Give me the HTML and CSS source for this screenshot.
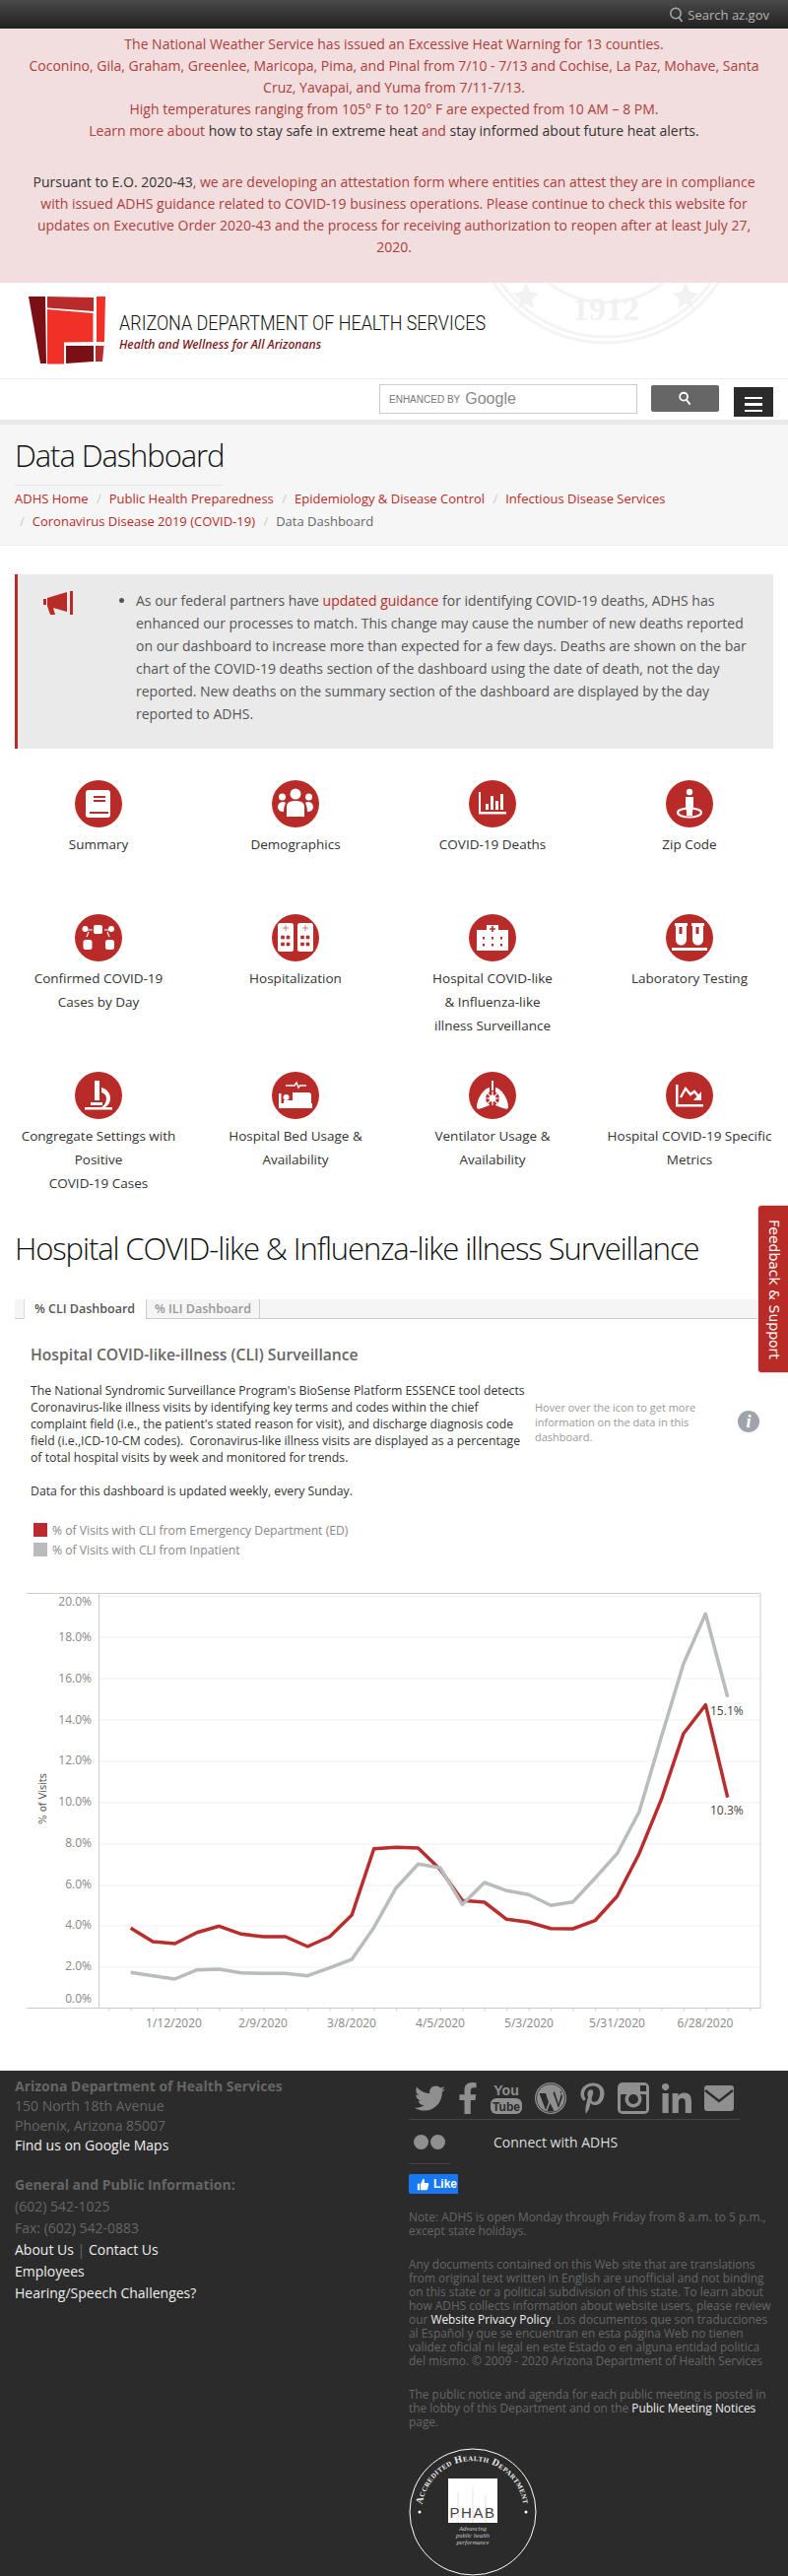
FILE: index.html
```html
<!DOCTYPE html>
<html lang="en">
<head>
    <meta charset="UTF-8">
    <meta name="viewport" content="width=device-width, initial-scale=1.0">
    <title>Data Dashboard</title>
    <link rel="stylesheet" href="styles.css">
</head>
<body>
    <div class="top-bar">
        <svg class="top-search-icon" viewBox="0 0 16 16"><circle cx="7" cy="6.5" r="5.2"/><path d="M10.5 11l3 4"/></svg>
        <span>Search az.gov</span>
    </div>

    <div class="heat-alert">
        <p>The National Weather Service has issued an Excessive Heat Warning for 13 counties.<br>
        Coconino, Gila, Graham, Greenlee, Maricopa, Pima, and Pinal from 7/10 - 7/13 and Cochise, La Paz, Mohave, Santa Cruz, Yavapai, and Yuma from 7/11-7/13.<br>
        High temperatures ranging from 105&deg; F to 120&deg; F are expected from 10 AM &ndash; 8 PM.<br>
        <a href="#">Learn more about</a> <a href="#" class="dark">how to stay safe in extreme heat</a> <a href="#">and</a> <a href="#" class="dark">stay informed about future heat alerts.</a></p>
        <p><a href="#" class="dark">Pursuant to E.O. 2020-43</a>, we are developing an attestation form where entities can attest they are in compliance with issued ADHS guidance related to COVID-19 business operations. Please continue to check this website for updates on Executive Order 2020-43 and the process for receiving authorization to reopen after at least July 27, 2020.</p>
    </div>

    <div class="site-header">
        <svg class="watermark" viewBox="0 0 300 120">
            <circle cx="135" cy="-76" r="137" class="wm-ring"/>
            <circle cx="135" cy="-76" r="131" class="wm-ring"/>
            <circle cx="135" cy="-76" r="96" class="wm-ring"/>
            <path class="wm-star" d="M54 0l4 9 9 2-7 6 2 9-8-5-8 5 2-9-7-6 9-2zM216 0l4 9 9 2-7 6 2 9-8-5-8 5 2-9-7-6 9-2z"/>
            <text x="135" y="38" class="wm-text">1912</text>
        </svg>
        <svg class="logo" viewBox="29 301 78 69">
            <path fill="#7a1015" d="M29 301h17l1 68h-6z"/>
            <path fill="#b92b2b" d="M48 301l47 1v14l-47-3.5z"/>
            <path fill="#f13128" d="M98 301h9l-1 46h-8zM48 314l46.5 4v29l-29.5 .5v22h-17z"/>
            <path fill="#7a1015" d="M67 351h28v16l-28 2z"/>
            <path fill="#b92b2b" d="M97 351h8.5l-1.5 16h-7z"/>
        </svg>
        <div class="logo-text">
            <div class="logo-title">ARIZONA DEPARTMENT OF HEALTH SERVICES</div>
            <div class="logo-tag">Health and Wellness for All Arizonans</div>
        </div>
    </div>

    <div class="search-row">
        <div class="search-box"><span class="enhanced">ENHANCED BY</span> <span class="google">Google</span></div>
        <button class="search-btn"><svg viewBox="0 0 16 16"><circle cx="6.5" cy="6" r="4.2"/><path d="M9.5 9.5l4 5"/></svg></button>
        <button class="menu-btn"><span></span><span></span><span></span></button>
    </div>

    <div class="title-band">
        <h1>Data Dashboard</h1>
        <ul class="crumbs">
            <li><a href="#">ADHS Home</a></li>
            <li><a href="#">Public Health Preparedness</a></li>
            <li><a href="#">Epidemiology &amp; Disease Control</a></li>
            <li><a href="#">Infectious Disease Services</a></li>
            <li><a href="#">Coronavirus Disease 2019 (COVID-19)</a></li>
            <li>Data Dashboard</li>
        </ul>
    </div>

    <div class="notice">
        <svg class="notice-icon" viewBox="0 0 32 24"><path d="M0 8h3v6H0zM4 7l20-6v20l-14-4 2 7H7l-3-9z"/><path d="M27 0h3v24h-3z"/></svg>
        <ul>
            <li>As our federal partners have <a href="#">updated guidance</a> for identifying COVID-19 deaths, ADHS has enhanced our processes to match. This change may cause the number of new deaths reported on our dashboard to increase more than expected for a few days. Deaths are shown on the bar chart of the COVID-19 deaths section of the dashboard using the date of death, not the day reported. New deaths on the summary section of the dashboard are displayed by the day reported to ADHS.</li>
        </ul>
    </div>

    <div class="tiles">
        <a class="tile" href="#">
            <span class="disc"><svg viewBox="0 0 48 48"><rect x="11" y="10" width="25" height="28" rx="3" fill="#fff"/><path d="M19 17h12M19 21h12M15 33h19" stroke="#b92b29" stroke-width="2"/></svg></span>
            Summary
        </a>
        <a class="tile" href="#">
            <span class="disc"><svg viewBox="0 0 48 48" fill="#fff"><circle cx="24" cy="14" r="5.5"/><circle cx="10.5" cy="17" r="3.5"/><circle cx="37.5" cy="17" r="3.5"/><path d="M15 37v-10c0-4 3-6 9-6s9 2 9 6v10zM6 28c0-4 2-6 6-6l2 1c-1 2-2 5-2 9-3 0-5-1-6-4zM42 28c0-4-2-6-6-6l-2 1c1 2 2 5 2 9 3 0 5-1 6-4z"/></svg></span>
            Demographics
        </a>
        <a class="tile" href="#">
            <span class="disc"><svg viewBox="0 0 48 48" fill="#fff"><path d="M10 12h2v20h26v2.5H10zM17 24h3v6h-3zM22 16h3v14h-3zM27 21h3v9h-3zM32 14h3v16h-3z"/></svg></span>
            COVID-19 Deaths
        </a>
        <a class="tile" href="#">
            <span class="disc"><svg viewBox="0 0 48 48" fill="#fff"><circle cx="24" cy="12" r="3.2"/><path d="M20 17h8v9l-1.5 10h-5L20 26z"/><ellipse cx="24" cy="33" rx="12" ry="4.5" fill="none" stroke="#fff" stroke-width="2.2"/><path d="M24 27v9" stroke="#fff" stroke-width="6"/></svg></span>
            Zip Code
        </a>

        <a class="tile" href="#">
            <span class="disc"><svg viewBox="0 0 48 48" fill="#fff"><rect x="19" y="11" width="9" height="9" rx="2"/><circle cx="10.5" cy="15" r="3"/><circle cx="37" cy="15" r="3"/><rect x="8.5" y="26" width="9" height="10" rx="2.5"/><rect x="31" y="26" width="9" height="10" rx="2.5"/><path d="M18 16h-6M30 16h5M14 18l-2 5M33 18l2 5" stroke="#fff" stroke-width="1.2"/></svg></span>
            Confirmed COVID-19<br>Cases by Day
        </a>
        <a class="tile" href="#">
            <span class="disc"><svg viewBox="0 0 48 48"><rect x="6" y="9" width="16" height="29" rx="2.5" fill="#fff"/><rect x="26" y="9" width="16" height="29" rx="2.5" fill="#fff"/><path d="M14 11v6M11 14h6M34 11v6M31 14h6M9.5 22h3v3h-3zM15 22h3v3h-3zM9.5 29h3v3h-3zM15 29h3v3h-3zM29.5 22h3v3h-3zM35 22h3v3h-3zM29.5 29h3v3h-3zM35 29h3v3h-3z" fill="#b92b29" stroke="#b92b29" stroke-width=".6"/></svg></span>
            Hospitalization
        </a>
        <a class="tile" href="#">
            <span class="disc"><svg viewBox="0 0 48 48"><path d="M8 16h10v-5h12v5h10v21H8z" fill="#fff"/><path d="M24 12v6M21 15h6" stroke="#b92b29" stroke-width="1.6"/><path d="M14 23h2v2.5h-2zM23 23h2v2.5h-2zM32 23h2v2.5h-2zM14 30h2v2.5h-2zM23 30h2v2.5h-2zM32 30h2v2.5h-2z" fill="#b92b29"/></svg></span>
            Hospital COVID-like<br>&amp; Influenza-like<br>illness Surveillance
        </a>
        <a class="tile" href="#">
            <span class="disc"><svg viewBox="0 0 48 48"><path d="M9 9h13v3h-1v14a4.5 4.5 0 0 1-11 0V12H9zM26 9h13v3h-1v14a4.5 4.5 0 0 1-11 0V12h-1zM6 34h36v3H6z" fill="#fff"/><path d="M13.5 13h3v7h-3zM30.5 13h3v7h-3z" fill="#b92b29"/></svg></span>
            Laboratory Testing
        </a>

        <a class="tile" href="#">
            <span class="disc"><svg viewBox="0 0 48 48" fill="#fff"><path d="M20 9h5v20h-5zM10 36h28v2.5H10zM16 31h12v3H16z"/><path d="M27 16c6 2 9 6 9 11 0 4-2 7-5 9h-4c3-2 5-5 5-9 0-3-2-5-5-6z"/></svg></span>
            Congregate Settings with<br>Positive<br>COVID-19 Cases
        </a>
        <a class="tile" href="#">
            <span class="disc"><svg viewBox="0 0 48 48" fill="#fff"><path d="M7 22h2.5v10H40V24c0-2-1-3-3-3H21v8h-9v8H7zM12 32h29v5H12z"/><circle cx="14.5" cy="26" r="3"/><path d="M14 14h9l2-3 2 5 1.5-2H35" fill="none" stroke="#fff" stroke-width="1.4"/></svg></span>
            Hospital Bed Usage &amp;<br>Availability
        </a>
        <a class="tile" href="#">
            <span class="disc"><svg viewBox="0 0 48 48" fill="#fff"><path d="M23 9h2v10h-2z"/><path d="M21 16c-6 1-13 11-13 20 0 2 2 2 5 1l8-3zM27 16c6 1 13 11 13 20 0 2-2 2-5 1l-8-3z"/><circle cx="24" cy="27" r="7" fill="#b92b29"/><circle cx="24" cy="27" r="3.5"/><path d="M24 20v14M17 27h14M19 22l10 10M29 22L19 32" stroke="#fff" stroke-width="1.2"/></svg></span>
            Ventilator Usage &amp;<br>Availability
        </a>
        <a class="tile" href="#">
            <span class="disc"><svg viewBox="0 0 48 48" fill="#fff"><path d="M10 13h2.5v20H38v2.5H10z"/><path d="M15 26l5-9 5 6 4-3 5 6" fill="none" stroke="#fff" stroke-width="2.4"/><path d="M36 20v9h-8z"/></svg></span>
            Hospital COVID-19 Specific<br>Metrics
        </a>
    </div>

    <h2 class="section-title">Hospital COVID-like &amp; Influenza-like illness Surveillance</h2>

    <div class="tabs">
        <span class="tab active">% CLI Dashboard</span>
        <span class="tab">% ILI Dashboard</span>
    </div>

    <div class="dash">
        <h3>Hospital COVID-like-illness (CLI) Surveillance</h3>
        <div class="dash-row">
            <div class="dash-text">
                The National Syndromic Surveillance Program's BioSense Platform ESSENCE tool detects Coronavirus-like illness visits by identifying key terms and codes within the chief complaint field (i.e., the patient's stated reason for visit), and discharge diagnosis code field (i.e.,ICD-10-CM codes).&nbsp; Coronavirus-like illness visits are displayed as a percentage of total hospital visits by week and monitored for trends.<br><br>
                Data for this dashboard is updated weekly, every Sunday.
            </div>
            <div class="dash-hover">Hover over the icon to get more information on the data in this dashboard.</div>
            <div class="info-dot">i</div>
        </div>
        <div class="legend">
            <div class="legend-row"><span class="swatch red"></span>% of Visits with CLI from Emergency Department (ED)</div>
            <div class="legend-row"><span class="swatch grey"></span>% of Visits with CLI from Inpatient</div>
        </div>
    </div>

    <svg class="chart" viewBox="0 0 800 502">
        <path class="grid" d="M101 20.5H772M101 62H772M101 104H772M101 146H772M101 188H772M101 230H772M101 272H772M101 314H772M101 355H772M101 397H772"/>
        <path class="frame" d="M27 17.5H772V438.5H27M100.5 17.5V438.5"/>
        <line class="ticks" x1="110.2" y1="440" x2="765" y2="440"/>
        <text class="y-tick" x="93" y="30">20.0%</text>
        <text class="y-tick" x="93" y="66">18.0%</text>
        <text class="y-tick" x="93" y="108">16.0%</text>
        <text class="y-tick" x="93" y="150">14.0%</text>
        <text class="y-tick" x="93" y="191">12.0%</text>
        <text class="y-tick" x="93" y="233">10.0%</text>
        <text class="y-tick" x="93" y="275">8.0%</text>
        <text class="y-tick" x="93" y="317">6.0%</text>
        <text class="y-tick" x="93" y="358">4.0%</text>
        <text class="y-tick" x="93" y="400">2.0%</text>
        <text class="y-tick" x="93" y="433">0.0%</text>
        <text class="x-tick" x="176.5" y="458">1/12/2020</text>
        <text class="x-tick" x="267" y="458">2/9/2020</text>
        <text class="x-tick" x="357" y="458">3/8/2020</text>
        <text class="x-tick" x="447" y="458">4/5/2020</text>
        <text class="x-tick" x="537" y="458">5/3/2020</text>
        <text class="x-tick" x="626.5" y="458">5/31/2020</text>
        <text class="x-tick" x="716" y="458">6/28/2020</text>
        <text class="y-title" transform="translate(47 226) rotate(-90)">% of Visits</text>
        <polyline class="line-red" points="132.7,357.3 155.1,371 177.6,373 200,361.7 222.5,355.3 244.9,363.3 267.4,366 289.8,366 312.3,376 334.7,366 357.2,344 379.6,276.7 402,275.3 424.5,276 446.9,297.7 469.4,329.3 491.8,331 514.3,348.3 536.7,351.3 559.2,357.7 581.6,358 604,349.7 626.5,325 648.9,281.7 671.4,226.7 693.8,160 716.3,130.7 738.7,224.7"/>
        <polyline class="line-grey" points="132.7,402.3 155.1,405.7 177.6,409 200,399.7 222.5,399 244.9,402.7 267.4,403.3 289.8,403.3 312.3,405.7 334.7,397.7 357.2,389 379.6,356.7 402,316.7 424.5,292.3 446.9,296 469.4,333.3 491.8,311 514.3,319.3 536.7,323.3 559.2,334.3 581.6,330.7 604,306.7 626.5,281.7 648.9,239.3 671.4,163.3 693.8,89.3 716.3,38.3 738.7,122.7"/>
        <text class="end-label" x="721" y="141">15.1%</text>
        <text class="end-label" x="721" y="242">10.3%</text>
    </svg>

    <a class="feedback" href="#">Feedback &amp; Support</a>

    <footer class="site-footer">
        <div class="foot-left">
            <div class="foot-addr">
                <strong>Arizona Department of Health Services</strong><br>
                150 North 18th Avenue<br>
                Phoenix, Arizona 85007<br>
                <a href="#">Find us on Google Maps</a>
            </div>
            <div class="foot-info">
                <strong>General and Public Information:</strong><br>
                (602) 542-1025<br>
                Fax: (602) 542-0883<br>
                <a href="#">About Us</a> <span class="pipe">|</span> <a href="#">Contact Us</a><br>
                <a href="#">Employees</a><br>
                <a href="#">Hearing/Speech Challenges?</a>
            </div>
        </div>
        <div class="foot-right">
            <div class="social">
                <svg class="soc tw" viewBox="0 0 512 512"><path d="M459.37 151.716c.325 4.548.325 9.097.325 13.645 0 138.72-105.583 298.558-298.558 298.558-59.452 0-114.68-17.219-161.137-47.106 8.447.974 16.568 1.299 25.34 1.299 49.055 0 94.213-16.568 130.274-44.832-46.132-.975-84.792-31.188-98.112-72.772 6.498.974 12.995 1.624 19.818 1.624 9.421 0 18.843-1.3 27.614-3.573-48.081-9.747-84.143-51.98-84.143-102.985v-1.299c13.969 7.797 30.214 12.67 47.431 13.319-28.264-18.843-46.781-51.005-46.781-87.391 0-19.492 5.197-37.36 14.294-52.954 51.655 63.675 129.3 105.258 216.365 109.807-1.624-7.797-2.599-15.918-2.599-24.04 0-57.828 46.782-104.934 104.934-104.934 30.213 0 57.502 12.67 76.67 33.137 23.715-4.548 46.456-13.32 66.599-25.34-7.798 24.366-24.366 44.833-46.132 57.827 21.117-2.273 41.584-8.122 60.426-16.243-14.292 20.791-32.161 39.308-52.628 54.253z"/></svg>
                <svg class="soc fb" viewBox="0 0 320 512"><path d="M279.14 288l14.22-92.66h-88.91v-60.13c0-25.35 12.42-50.06 52.24-50.06h40.42V6.26S260.43 0 225.36 0c-73.22 0-121.08 44.38-121.08 124.72v70.62H22.89V288h81.39v224h100.17V288z"/></svg>
                <svg class="soc wide" viewBox="0 0 32 32"><text x="16" y="13" class="yt-you">You</text><rect y="16" width="32" height="16" rx="6"/><text x="16" y="29" class="yt-tube">Tube</text></svg>
                <svg class="soc wide" viewBox="0 0 32 32"><circle cx="16" cy="16" r="16"/><circle cx="16" cy="16" r="14.5" fill="none" stroke="#2b2b2b" stroke-width=".8"/><path d="M4.5 11L11 28l3-8-3-9zM12 9h8l-1.5 1.5L24 26l4-11c0-2-1-4-2-5l-.5-1H27v2l-3 11-4-13h-8zM15.5 21l-3 8c2 .6 5 .6 7 0z" fill="#2b2b2b"/></svg>
                <svg class="soc pin" viewBox="0 0 384 512"><path d="M204 6.5C101.4 6.5 0 74.9 0 185.6 0 256 39.6 296 63.6 296c9.9 0 15.6-27.6 15.6-35.4 0-9.3-23.7-29.1-23.7-67.8 0-80.4 61.2-137.4 140.4-137.4 68.1 0 118.5 38.7 118.5 109.8 0 53.1-21.3 152.7-90.3 152.7-24.9 0-46.2-18-46.2-43.8 0-37.8 26.4-74.4 26.4-113.4 0-66.2-93.9-54.2-93.9 25.8 0 16.8 2.1 35.4 9.6 50.7-13.8 59.4-42 147.9-42 209.1 0 18.9 2.7 37.5 4.5 56.4 3.4 3.8 1.7 3.4 6.9 1.5 50.4-69 48.6-82.5 71.4-172.8 12.3 23.4 44.1 36 69.3 36 106.2 0 153.9-103.5 153.9-196.8C384 71.3 298.2 6.5 204 6.5z"/></svg>
                <svg class="soc wide" viewBox="0 0 32 32"><rect width="32" height="32" rx="5"/><rect x="3" y="12" width="26" height="17" rx="1" fill="#2b2b2b"/><circle cx="16" cy="17" r="8.5"/><circle cx="16" cy="17" r="5" fill="#2b2b2b"/><rect x="23" y="3" width="6" height="6" fill="#2b2b2b"/></svg>
                <svg class="soc med" viewBox="0 0 448 448"><path d="M100.28 448H7.4V148.9h92.88zM53.79 108.1C24.09 108.1 0 83.5 0 53.8a53.79 53.79 0 0 1 107.58 0c0 29.7-24.1 54.3-53.79 54.3zM447.9 448h-92.68V302.4c0-34.7-.7-79.2-48.29-79.2-48.29 0-55.69 37.7-55.69 76.7V448h-92.78V148.9h89.08v40.8h1.3c12.4-23.5 42.69-48.3 87.88-48.3 94 0 111.28 61.9 111.28 142.3V448z"/></svg>
                <svg class="soc med" viewBox="0 0 30 32"><rect y="3" width="30" height="26" rx="3"/><path d="M1 8l14 11L29 8" fill="none" stroke="#2b2b2b" stroke-width="2.5"/></svg>
            </div>
            <div class="connect-row">
                <svg class="flickr" viewBox="0 0 32 16"><circle cx="7.5" cy="7.5" r="7.5"/><circle cx="24.5" cy="7.5" r="7.5"/></svg>
                <span>Connect with ADHS</span>
            </div>
            <div class="like-btn"><svg viewBox="0 0 16 16"><path d="M1 7h3v8H1zM5 7l3-6c2 0 2 2 1.5 5H14c1 0 1.5 1 1 2l-1.5 6c-.2.7-.7 1-1.5 1H5z"/></svg>Like</div>
            <p>Note: ADHS is open Monday through Friday from 8 a.m. to 5 p.m., except state holidays.</p>
            <p>Any documents contained on this Web site that are translations from original text written in English are unofficial and not binding on this state or a political subdivision of this state. To learn about how ADHS collects information about website users, please review our <a href="#">Website Privacy Policy</a>. Los documentos que son traducciones al Espa&ntilde;ol y que se encuentran en esta p&aacute;gina Web no tienen validez oficial ni legal en este Estado o en alguna entidad politica del mismo. &copy; 2009 - 2020 Arizona Department of Health Services</p>
            <p>The public notice and agenda for each public meeting is posted in the lobby of this Department and on the <a href="#">Public Meeting Notices</a> page.</p>
            <svg class="seal" viewBox="0 0 130 130">
                <defs>
                    <path id="seal-top" d="M65 117A52 52 0 1 1 65.01 117"/>
                    <path id="seal-bottom" d="M65 5A60 60 0 1 0 64.99 5"/>
                </defs>
                <circle cx="65" cy="65" r="64" class="seal-ring"/>
                <text class="seal-text"><textPath href="#seal-top" startOffset="50%">Accredited Health Department</textPath></text>
                <text class="seal-text"><textPath href="#seal-bottom" startOffset="50%">Public Health Accreditation Board</textPath></text>
                <circle cx="11" cy="65" r="1.5" fill="#fff"/>
                <circle cx="119" cy="65" r="1.5" fill="#fff"/>
                <rect x="40" y="31" width="50" height="45" fill="#fff"/>
                <path d="M50 45v31M65 40v36M78 48v28" stroke="#ccc" stroke-width=".6"/>
                <text x="65" y="71" class="seal-phab">PHAB</text>
                <text x="65" y="84" class="seal-small">Advancing</text>
                <text x="65" y="91" class="seal-small">public health</text>
                <text x="65" y="98" class="seal-small">performance</text>
            </svg>
        </div>
    </footer>
</body>
</html>
```

FILE: styles.css
```css
* {
    box-sizing: border-box;
}

body {
    margin: 0;
    position: relative;
    font-family: "Open Sans", Arial, sans-serif;
    font-size: 14px;
    color: #333;
    background-color: #fff;
}

a {
    color: #b92b27;
    text-decoration: none;
}

.top-bar {
    height: 29px;
    display: flex;
    align-items: center;
    justify-content: flex-end;
    padding-right: 19px;
    background: linear-gradient(#4a4a4a, #202020);
    color: #b5b5b5;
    font-size: 13px;
}

.top-search-icon {
    width: 16px;
    height: 16px;
    margin-right: 3px;
    fill: none;
    stroke: #aaa;
    stroke-width: 1.5;
}

.heat-alert {
    height: 258px;
    padding: 5px 15px 0;
    background-color: #f2dede;
    color: #ac3f3d;
    font-size: 14px;
    line-height: 22px;
    text-align: center;
}

.heat-alert p {
    margin: 0 0 30px;
}

.heat-alert p + p {
    padding: 0 10px;
}

.heat-alert a {
    color: #ac3f3d;
}

.heat-alert a.dark {
    color: #333;
}

.site-header {
    position: relative;
    height: 97px;
    padding: 14px 0 0 29px;
    display: flex;
    overflow: hidden;
}

.watermark {
    position: absolute;
    left: 480px;
    top: 0;
    width: 300px;
    height: 120px;
}

.wm-ring {
    fill: none;
    stroke: #f4f4f4;
    stroke-width: 3;
}

.wm-star {
    fill: #f2f2f2;
}

.wm-text {
    font-family: "Liberation Serif", serif;
    font-size: 34px;
    font-weight: bold;
    fill: #f1f1f1;
    text-anchor: middle;
}

.logo {
    width: 78px;
    height: 69px;
    flex-shrink: 0;
    position: relative;
}

.logo-text {
    margin: 15px 0 0 14px;
    position: relative;
}

.logo-title {
    font-family: Roboto, sans-serif;
    font-weight: 300;
    font-size: 21px;
    line-height: 24px;
    color: #111;
    white-space: nowrap;
    transform: scaleX(.855);
    transform-origin: left center;
}

.logo-tag {
    margin-top: 2px;
    font-family: "Noto Sans", sans-serif;
    font-style: italic;
    font-weight: 500;
    font-size: 12.2px;
    line-height: 16px;
    color: #7a1015;
}

.search-row {
    height: 42px;
    border-top: 1px solid #eee;
    display: flex;
    align-items: flex-start;
    padding: 5px 15px 0 385px;
}

.search-box {
    width: 262px;
    height: 30px;
    border: 1px solid #ccc;
    padding-left: 9px;
    display: flex;
    align-items: center;
    gap: 5px;
    font-family: "Liberation Sans", sans-serif;
    color: #777;
}

.enhanced {
    font-size: 10px;
}

.google {
    font-size: 16px;
    color: #888;
}

.search-btn {
    width: 69px;
    height: 27px;
    margin: 1px 0 0 14px;
    border: 0;
    border-radius: 2px;
    background-color: #666;
    padding: 0;
}

.search-btn svg {
    width: 15px;
    height: 15px;
    fill: none;
    stroke: #fff;
    stroke-width: 2;
    vertical-align: middle;
}

.menu-btn {
    width: 40px;
    height: 30px;
    margin: 3px 0 0 15px;
    border: 0;
    padding: 10px 11px 5px;
    background-color: #2b2b2b;
    display: flex;
    flex-direction: column;
    gap: 4px;
}

.menu-btn span {
    display: block;
    width: 18px;
    height: 3px;
    background-color: #fff;
}

.title-band {
    height: 128px;
    border-top: 5px solid #e9e9e9;
    border-bottom: 1px solid #eee;
    background-color: #f6f6f6;
    padding: 11px 15px 0;
}

h1 {
    display: inline-block;
    margin: 0;
    font-size: 31px;
    font-weight: 300;
    line-height: 40px;
    letter-spacing: -1.1px;
    padding-bottom: 10px;
    border-bottom: 1px solid #e5e5e5;
    color: #111;
}

.crumbs {
    list-style: none;
    margin: 2px 0 0;
    padding: 0;
    font-size: 13px;
    line-height: 23px;
}

.crumbs li {
    display: inline-block;
    color: #666;
}

.crumbs li + li::before {
    content: "/";
    padding: 0 8px 0 5px;
    color: #ccc;
}

.notice {
    margin: 29px 15px 0;
    height: 177px;
    background-color: #eaeaea;
    border-left: 3px solid #b92b27;
    display: flex;
    color: #555;
    line-height: 23px;
}

.notice-icon {
    width: 32px;
    height: 24px;
    margin: 17px 0 0 26px;
    flex-shrink: 0;
    fill: #b92b27;
}

.notice ul {
    margin: 15px 0 0;
    padding: 0 26px 0 62px;
}

.tiles {
    margin-top: 32px;
    display: grid;
    grid-template-columns: repeat(4, 200px);
    grid-auto-rows: min-content;
}

.tile {
    display: block;
    min-height: 136px;
    padding-bottom: 35px;
    color: #333;
    font-size: 13.5px;
    text-align: center;
    line-height: 24px;
}

.disc {
    display: block;
    width: 48px;
    height: 48px;
    margin: 0 auto 5px;
    border-radius: 50%;
    background-color: #b92b29;
}

.disc svg {
    display: block;
    width: 48px;
    height: 48px;
}

.section-title {
    margin: 0;
    padding-left: 15px;
    font-size: 31px;
    font-weight: 300;
    line-height: 38px;
    letter-spacing: -1.1px;
    color: #111;
}

.tabs {
    margin: 33px 31px 0 15px;
    height: 20px;
    background-color: #f5f5f5;
    border-bottom: 1px solid #ccc;
    padding-left: 9px;
    display: flex;
    font-size: 12.5px;
    font-weight: 600;
    line-height: 19px;
    color: #999;
}

.tab {
    height: 19px;
    padding: 0 8px;
    border-right: 1px solid #ccc;
}

.tab.active {
    height: 20px;
    width: 125px;
    padding: 0 0 0 10px;
    background-color: #fff;
    border-left: 1px solid #ddd;
    color: #555;
}

.dash {
    padding-left: 31px;
}

.dash h3 {
    margin: 26px 0 18px;
    font-size: 15.7px;
    font-weight: 600;
    line-height: 20px;
    color: #666;
}

.dash-row {
    display: flex;
}

.dash-text {
    width: 505px;
    flex-shrink: 0;
    font-size: 12.25px;
    line-height: 17px;
    color: #333;
}

.dash-hover {
    width: 180px;
    margin: 18px 0 0 7px;
    font-size: 11px;
    line-height: 15px;
    color: #999;
}

.info-dot {
    width: 22px;
    height: 22px;
    margin: 29px 0 0 26px;
    border-radius: 50%;
    background-color: #9ea3ac;
    color: #fff;
    font-family: "Liberation Serif", serif;
    font-style: italic;
    font-weight: bold;
    font-size: 18px;
    line-height: 22px;
    text-align: center;
}

.legend {
    margin: 24px 0 0 3px;
    font-size: 12.2px;
    color: #888;
}

.legend-row {
    display: flex;
    align-items: center;
    height: 14px;
    margin-bottom: 6px;
}

.swatch {
    width: 14px;
    height: 14px;
    margin-right: 5px;
}

.swatch.red {
    background-color: #b92b2f;
}

.swatch.grey {
    background-color: #b9bbbd;
}

.chart {
    display: block;
    width: 800px;
    height: 502px;
    margin-top: 20px;
}

.grid {
    fill: none;
    stroke: #f0f0f0;
}

.frame {
    fill: none;
    stroke: #ccc;
}

.ticks {
    stroke: #ccc;
    stroke-width: 3;
    stroke-dasharray: 1 21.45;
}

.y-tick {
    font-size: 12px;
    fill: #888;
    text-anchor: end;
}

.x-tick {
    font-size: 12px;
    fill: #888;
    text-anchor: middle;
}

.y-title {
    font-family: "DejaVu Sans", sans-serif;
    font-size: 10px;
    fill: #555;
    text-anchor: middle;
}

.end-label {
    font-size: 12px;
    fill: #444;
}

.line-red,
.line-grey {
    fill: none;
    stroke-width: 3.5;
    stroke-linejoin: round;
}

.line-red {
    stroke: #b82e2e;
}

.line-grey {
    stroke: #b9bcbc;
}

.feedback {
    position: absolute;
    top: 1223px;
    right: 0;
    width: 31px;
    height: 171px;
    border-radius: 4px 0 0 4px;
    border: 1px solid #ddd;
    border-right: 0;
    background-color: #b92b27;
    color: #fff;
    font-family: "DejaVu Sans", sans-serif;
    font-size: 14px;
    line-height: 29px;
    text-align: center;
    white-space: nowrap;
    writing-mode: vertical-rl;
}

.site-footer {
    height: 513px;
    background-color: #2b2b2b;
    color: #666;
    display: flex;
}

.site-footer a {
    color: #eee;
}

.foot-left {
    width: 415px;
    padding: 6px 0 0 15px;
}

.foot-addr {
    line-height: 20px;
}

.foot-info {
    margin-top: 19px;
    line-height: 22px;
}

.pipe {
    color: #666;
}

.foot-right {
    width: 385px;
    padding: 12px 13px 0 0;
    font-size: 11.9px;
    line-height: 14px;
}

.foot-right p {
    margin: 0 0 20px;
}

.social {
    display: flex;
    justify-content: space-between;
    align-items: center;
    width: 336px;
    height: 38px;
    padding: 0 6px 6px;
    border-bottom: 1px solid #444;
}

.soc {
    height: 32px;
    flex-shrink: 0;
    fill: #8f8f8f;
}

.soc.tw {
    width: 31px;
}

.soc.fb {
    width: 20px;
}

.soc.wide {
    width: 32px;
}

.soc.pin {
    width: 25px;
}

.soc.med {
    width: 30px;
}

.yt-you {
    font-family: "Liberation Sans", sans-serif;
    font-weight: bold;
    font-size: 14px;
    text-anchor: middle;
}

.yt-tube {
    font-family: "Liberation Sans", sans-serif;
    font-weight: bold;
    font-size: 12px;
    fill: #2b2b2b;
    text-anchor: middle;
}

.connect-row {
    width: 336px;
    height: 45px;
    position: relative;
    display: flex;
    align-items: center;
    font-size: 14px;
    color: #ddd;
}

.connect-row::after {
    content: "";
    position: absolute;
    left: 0;
    bottom: 0;
    width: 42px;
    height: 1px;
    background-color: #444;
}

.flickr {
    width: 32px;
    height: 16px;
    margin: 0 49px 0 5px;
    fill: #8f8f8f;
}

.like-btn {
    width: 50px;
    height: 20px;
    margin: 10px 0 16px;
    padding-left: 8px;
    border-radius: 2px 0 0 2px;
    background-color: #1877f2;
    color: #fff;
    font-family: "Liberation Sans", sans-serif;
    font-size: 12px;
    font-weight: bold;
    line-height: 20px;
    display: flex;
    align-items: center;
    gap: 4px;
}

.like-btn svg {
    width: 13px;
    height: 13px;
    fill: #fff;
}

.seal {
    display: block;
    width: 130px;
    height: 130px;
}

.seal-ring {
    fill: none;
    stroke: #fff;
    stroke-width: 1;
}

.seal-text {
    font-family: "Liberation Serif", serif;
    font-size: 10px;
    font-variant: small-caps;
    font-weight: bold;
    letter-spacing: .4px;
    fill: #eee;
    text-anchor: middle;
}

.seal-phab {
    font-family: "Liberation Sans", sans-serif;
    font-size: 15px;
    letter-spacing: 1.5px;
    fill: #444;
    text-anchor: middle;
}

.seal-small {
    font-family: "Liberation Serif", serif;
    font-style: italic;
    font-size: 6.5px;
    fill: #ccc;
    text-anchor: middle;
}
```
